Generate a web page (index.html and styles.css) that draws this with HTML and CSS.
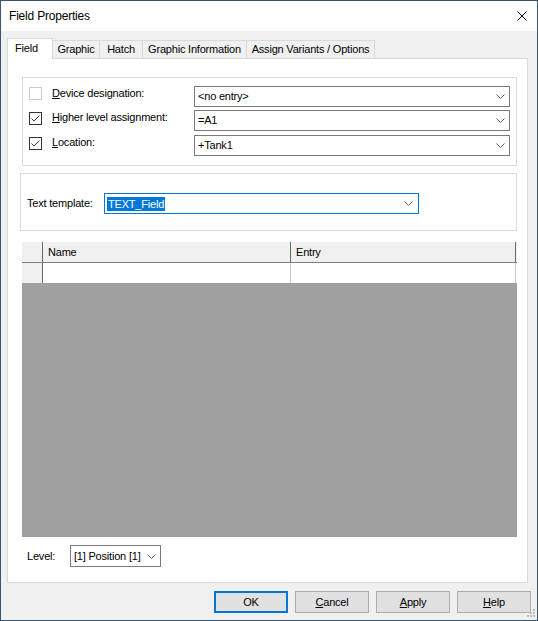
FILE: index.html
```html
<!DOCTYPE html>
<html>
<head>
<meta charset="utf-8">
<link rel="stylesheet" href="styles.css">
</head>
<body>
<div class="window">
  <div class="titlebar">
    <span class="title">Field Properties</span>
    <svg class="close" width="10" height="10" viewBox="0 0 10 10"><path d="M0.5 0.5 L9.5 9.5 M9.5 0.5 L0.5 9.5" stroke="#000" stroke-width="1" fill="none"/></svg>
  </div>
  <div class="content">
    <div class="tabs">
      <div class="tab active">Field</div>
      <div class="tab w-graphic">Graphic</div>
      <div class="tab w-hatch">Hatch</div>
      <div class="tab w-info">Graphic Information</div>
      <div class="tab w-assign">Assign Variants / Options</div>
    </div>
    <div class="panel">
      <div class="group g1">
        <div class="row r1">
          <span class="cb off"></span>
          <span class="lbl"><u>D</u>evice designation:</span>
          <div class="combo wide"><span class="val">&lt;no entry&gt;</span><svg class="chev" width="9" height="5" viewBox="0 0 9 5"><path d="M0.5 0.5 L4.5 4.5 L8.5 0.5" stroke="#606060" fill="none"/></svg></div>
        </div>
        <div class="row r2">
          <span class="cb on"><svg width="11" height="11" viewBox="0 0 11 11"><path d="M1.5 5.5 L4 8 L9.5 2.5" stroke="#404040" fill="none"/></svg></span>
          <span class="lbl"><u>H</u>igher level assignment:</span>
          <div class="combo wide"><span class="val">=A1</span><svg class="chev" width="9" height="5" viewBox="0 0 9 5"><path d="M0.5 0.5 L4.5 4.5 L8.5 0.5" stroke="#606060" fill="none"/></svg></div>
        </div>
        <div class="row r3">
          <span class="cb on"><svg width="11" height="11" viewBox="0 0 11 11"><path d="M1.5 5.5 L4 8 L9.5 2.5" stroke="#404040" fill="none"/></svg></span>
          <span class="lbl"><u>L</u>ocation:</span>
          <div class="combo wide"><span class="val">+Tank1</span><svg class="chev" width="9" height="5" viewBox="0 0 9 5"><path d="M0.5 0.5 L4.5 4.5 L8.5 0.5" stroke="#606060" fill="none"/></svg></div>
        </div>
      </div>
      <div class="group g2">
        <span class="lbl tt">Text template:</span>
        <div class="combo focus"><span class="sel">TEXT_Field</span><svg class="chev" width="9" height="5" viewBox="0 0 9 5"><path d="M0.5 0.5 L4.5 4.5 L8.5 0.5" stroke="#606060" fill="none"/></svg></div>
      </div>
      <div class="grid">
        <div class="grow head">
          <div class="c0"></div>
          <div class="c1">Name</div>
          <div class="c2">Entry</div>
        </div>
        <div class="grow data">
          <div class="c0"></div>
          <div class="c1"></div>
          <div class="c2"></div>
        </div>
      </div>
      <div class="level">
        <span class="lbl lv">Level:</span>
        <div class="combo small"><span class="val">[1] Position [1]</span><svg class="chev" width="9" height="5" viewBox="0 0 9 5"><path d="M0.5 0.5 L4.5 4.5 L8.5 0.5" stroke="#606060" fill="none"/></svg></div>
      </div>
    </div>
    <div class="buttons">
      <div class="btn default">OK</div>
      <div class="btn"><u>C</u>ancel</div>
      <div class="btn"><u>A</u>pply</div>
      <div class="btn"><u>H</u>elp</div>
    </div>
  </div>
  <svg class="grip" width="10" height="10" viewBox="0 0 10 10">
    <rect x="7" y="1" width="2" height="2" fill="#bdbdbd"/>
    <rect x="4" y="4" width="2" height="2" fill="#bdbdbd"/>
    <rect x="7" y="4" width="2" height="2" fill="#bdbdbd"/>
    <rect x="1" y="7" width="2" height="2" fill="#bdbdbd"/>
    <rect x="4" y="7" width="2" height="2" fill="#bdbdbd"/>
    <rect x="7" y="7" width="2" height="2" fill="#bdbdbd"/>
  </svg>
</div>
</body>
</html>
```

FILE: styles.css
```css
* { box-sizing: border-box; }
html, body { margin: 0; padding: 0; }
body {
  font-family: "Liberation Sans", Arial, sans-serif;
  font-size: 11px;
  letter-spacing: -0.2px;
  color: #000;
  background: #f0f0f0;
}
.window {
  position: relative;
  width: 538px;
  height: 621px;
  border: 1px solid #3a5570;
  background: #f0f0f0;
  display: flex;
  flex-direction: column;
}
.titlebar {
  height: 30px;
  background: #fff;
  display: flex;
  align-items: center;
  padding-left: 8px;
  flex-shrink: 0;
}
.title {
  font-size: 12px;
  line-height: 30px;
  letter-spacing: -0.2px;
}
.close {
  display: block;
  margin-left: auto;
  margin-right: 10px;
}
.content {
  padding-left: 6px;
}
.tabs {
  margin-top: 7px;
  height: 20px;
  display: flex;
  align-items: flex-end;
}
.tab {
  height: 18px;
  line-height: 17px;
  background: #f0f0f0;
  border-top: 1px solid #d9d9d9;
  border-right: 1px solid #d9d9d9;
  text-align: center;
  white-space: nowrap;
}
.tab.active {
  width: 46px;
  height: 21px;
  line-height: 18px;
  margin-bottom: -1px;
  background: #fff;
  border-left: 1px solid #d9d9d9;
  text-align: left;
  padding-left: 7px;
  position: relative;
  z-index: 1;
}
.w-graphic { width: 47px; }
.w-hatch { width: 43px; }
.w-info { width: 104px; }
.w-assign { width: 128px; }
.panel {
  width: 521px;
  height: 525px;
  background: #fff;
  border: 1px solid #d9d9d9;
  padding-top: 18px;
}
.group {
  border: 1px solid #dcdcdc;
  background: #fff;
}
.g1 {
  margin-left: 14px;
  width: 495px;
  height: 89px;
  padding: 8px 0 0 6px;
}
.row {
  display: flex;
  align-items: flex-start;
  height: 21px;
}
.r1 { margin-bottom: 3px; }
.r2 { margin-bottom: 4px; }
.cb {
  width: 13px;
  height: 13px;
  border: 1px solid #333;
  background: #fff;
  margin-top: 2px;
  flex-shrink: 0;
}
.cb svg { display: block; }
.r1 .cb { margin-top: 1px; }
.cb.off { border-color: #cccccc; }
.lbl {
  line-height: 14px;
  white-space: nowrap;
  flex-shrink: 0;
}
.row .lbl {
  margin-left: 10px;
  width: 142px;
}
.combo {
  height: 21px;
  border: 1px solid #7a7a7a;
  background: #fff;
  display: flex;
  align-items: center;
  padding-left: 2px;
  padding-right: 4px;
}
.combo .val {
  line-height: 19px;
  padding-left: 1px;
  white-space: nowrap;
}
.combo .chev {
  display: block;
  margin-left: auto;
  flex-shrink: 0;
}
.wide { width: 316px; }
.g2 {
  margin-top: 7px;
  margin-left: 12px;
  width: 497px;
  height: 58px;
  padding: 19px 0 0 6px;
  display: flex;
  align-items: flex-start;
}
.tt {
  width: 77px;
  margin-top: 3px;
}
.combo.focus {
  width: 315px;
  border-color: #0078d7;
  padding-right: 5px;
}
.sel {
  background: #0078d7;
  color: #fff;
  line-height: 14px;
  padding: 0 1px;
  white-space: nowrap;
}
.grid {
  margin-top: 11px;
  margin-left: 14px;
  width: 495px;
  height: 295px;
  background: #a0a0a0;
}
.grow {
  display: flex;
}
.grow.head {
  height: 21px;
  background: #f0f0f0;
  border-bottom: 1px solid #808080;
  line-height: 20px;
}
.grow.data {
  height: 20px;
  background: #fff;
}
.c0 {
  width: 21px;
  background: #f0f0f0;
  border-right: 1px solid #696969;
}
.c1 {
  width: 248px;
  padding-left: 5px;
}
.c2 {
  width: 225px;
  padding-left: 5px;
}
.head .c1, .head .c2 { border-right: 1px solid #696969; }
.data .c1, .data .c2 { border-right: 1px solid #c8c8c8; }
.level {
  margin-top: 8px;
  margin-left: 19px;
  display: flex;
  align-items: center;
  height: 22px;
}
.lv { width: 43px; }
.combo.small {
  width: 91px;
  height: 22px;
  padding-right: 4px;
}
.buttons {
  margin-top: 8px;
  padding-left: 207px;
  display: flex;
  gap: 7px;
}
.btn {
  width: 74px;
  height: 22px;
  flex-shrink: 0;
  background: #e1e1e1;
  border: 1px solid #adadad;
  text-align: center;
  line-height: 20px;
}
.btn.default {
  border: 2px solid #0078d7;
  line-height: 18px;
}
.grip {
  position: absolute;
  right: 1px;
  bottom: 2px;
  display: block;
}
```
